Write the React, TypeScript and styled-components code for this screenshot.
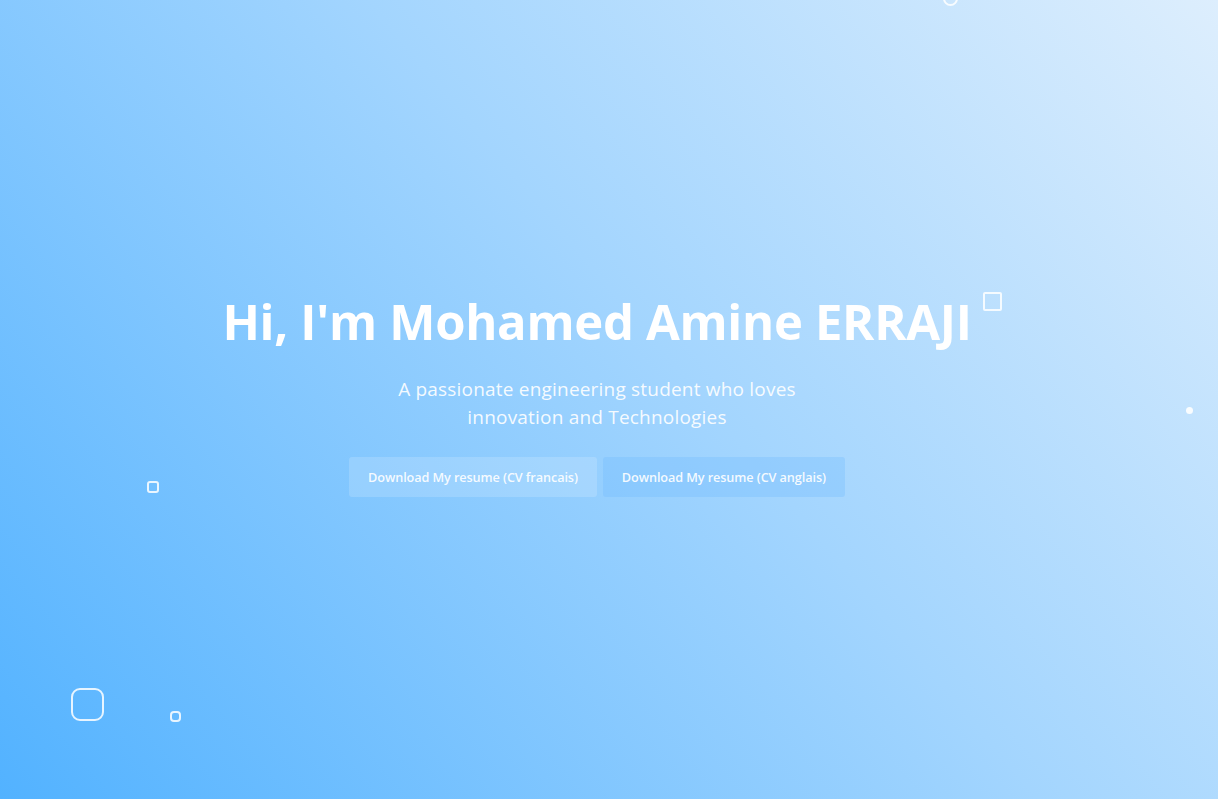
import React from "react";
import styled, { createGlobalStyle } from "styled-components";

const Global = createGlobalStyle`
  html, body { margin: 0; padding: 0; }
  body { font-family: "Poppins", "Open Sans", "Noto Sans", sans-serif; overflow: hidden; }
  * { box-sizing: border-box; }
`;

const Hero = styled.section`
  position: relative;
  width: 100%;
  height: 799px;
  overflow: hidden;
  display: flex;
  align-items: center;
  justify-content: center;
  padding: 0 24px 0 0;
  background: linear-gradient(50deg, #52b2ff 0%, #a3d5fe 55%, #ddeefd 100%);
`;

const Content = styled.div`
  display: flex;
  flex-direction: column;
  align-items: center;
  text-align: center;
  color: #ffffff;
  margin-top: -12px;
`;

const Title = styled.h1`
  margin: 0;
  font-family: "Open Sans", sans-serif;
  font-weight: 700;
  font-size: 49px;
  line-height: 60px;
  letter-spacing: -0.3px;
  color: #ffffff;
`;

const Subtitle = styled.p`
  margin: 24px 0 0;
  max-width: 430px;
  font-family: "Open Sans", sans-serif;
  font-weight: 500;
  font-size: 19px;
  line-height: 28px;
  letter-spacing: 0.2px;
  color: rgba(255, 255, 255, 0.92);
`;

const Actions = styled.div`
  display: flex;
  gap: 6px;
  margin-top: 26px;
`;

const Button = styled.a<{ $tone: "light" | "blue" }>`
  display: inline-flex;
  align-items: center;
  justify-content: center;
  height: 40px;
  padding: 0 19px;
  border-radius: 3px;
  font-family: "Open Sans", sans-serif;
  font-weight: 600;
  font-size: 12.7px;
  letter-spacing: -0.1px;
  color: rgba(255, 255, 255, 0.92);
  text-decoration: none;
  background: ${(p) =>
    p.$tone === "light" ? "rgba(255, 255, 255, 0.16)" : "rgba(110, 185, 255, 0.3)"};
`;

const Shape = styled.span<{ $size: number; $radius: number; $filled?: boolean }>`
  position: absolute;
  width: ${(p) => p.$size}px;
  height: ${(p) => p.$size}px;
  border-radius: ${(p) => p.$radius}px;
  border: ${(p) => (p.$filled ? "none" : "2px solid rgba(255, 255, 255, 0.85)")};
  background: ${(p) => (p.$filled ? "rgba(255, 255, 255, 0.9)" : "transparent")};
`;

const shapes = [
  { x: 943, y: -9, size: 15, radius: 8 },
  { x: 983, y: 292, size: 19, radius: 2 },
  { x: 1186, y: 407, size: 7, radius: 4, filled: true },
  { x: 147, y: 481, size: 12, radius: 3 },
  { x: 71, y: 688, size: 33, radius: 9 },
  { x: 170, y: 711, size: 11, radius: 4 },
];

export default function App() {
  return (
    <>
      <Global />
      <Hero>
        {shapes.map((s, i) => (
          <Shape
            key={i}
            $size={s.size}
            $radius={s.radius}
            $filled={s.filled}
            style={{ left: s.x, top: s.y }}
          />
        ))}
        <Content>
          <Title>Hi, I'm Mohamed Amine ERRAJI</Title>
          <Subtitle>
            A passionate engineering student who loves innovation and Technologies
          </Subtitle>
          <Actions>
            <Button href="#" $tone="light">Download My resume (CV francais)</Button>
            <Button href="#" $tone="blue">Download My resume (CV anglais)</Button>
          </Actions>
        </Content>
      </Hero>
    </>
  );
}
